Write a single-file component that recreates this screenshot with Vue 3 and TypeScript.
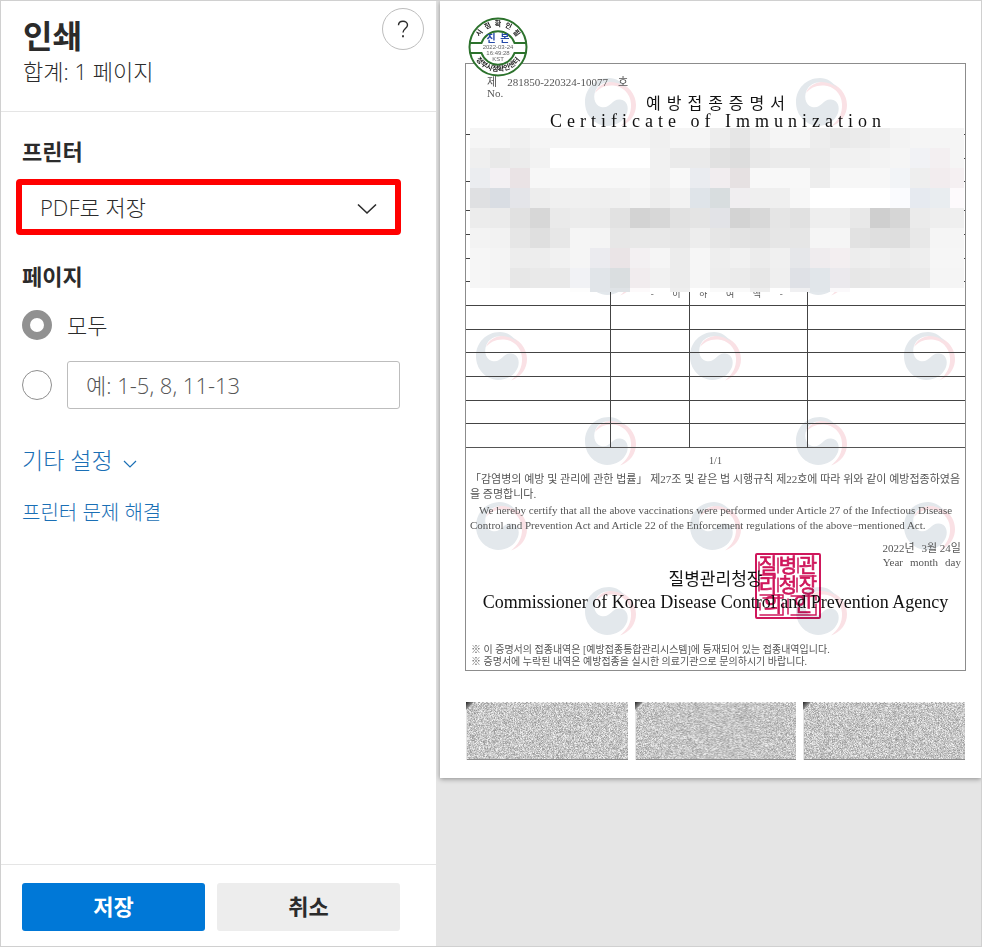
<script setup lang="ts">
import { onMounted, ref } from 'vue'

type PageMode = 'all' | 'range'

const printer = ref('pdf')
const mode = ref<PageMode>('all')
const range = ref('')

/* Redacted block: one entry per 20px cell, two digits for a grey, six for a tint. */
const mosaicRows: string[] = [
  'f5 f5 f0 f5 f5 f5 f5 f5 f5 f0 f5 f5 ed e6 ef f5 f5 ed e9 eb ee f3 f5 f5 f5',
  'ef e9 ec f2 ff ff ff ff ff f1 ea ea e1 dd e8 eb eb eb f1 f1 f3 f5 f1f2f5 f3eff1 f5',
  'ebedf0 f3f0f3 eae3e5 f7 f7 f7 f7 f7 f7 f1 f8 eaecf0 f1edef e6e1e2 f8 f8 f8 ed f7 f7 f7 f2f4f7 ee f2ecee f5f0f2',
  'dfe0e2 d9dde3 e4e5e9 ed f0 f0 ef f0 f3 ed f2 dfe4e9 d8dddf f0eef0 ef ef f7 ff ff ff ff fafbfe e6eaf0 e9edf0 fdfafc',
  'ec eb e1 d7 ea ec eb e2 d3 d7 e1 e4 e2e3e7 d3 d8 e5 e1 ee ee e8 cf d6 eb ee ef',
  'f3 f2 e6 df e7 f5 f4 e7 e8 e8 e6 ed e6 e3 e1 e6 e6 f5 f5 e2 df de e8 f5 f5',
  'f6 f4 ed ed f1 f5 ebebef eae4e6 f3f0f2 f5 ec f6 ee f1 ec f0 e6e7ea efecee f3eef0 ed ef ec ee f6 f6',
  'f6 f4 e7 e9 e9 f1f2f5 e1e5e9 dadee0 f1ecee f1 ec f6 ed eb e7 ef dfe1e6 e1e6ea ebe9ed e7 e9 e9 ea f5 f5',
  'ff ff ff ff ff fd e1e5e9 dfe3e6 fdfafb ff ee ff fa fa ee ff f0f0f2 e1e6ea fbf9fb ff ff ff ff ff ff',
]

const cells = mosaicRows.flatMap((row, y) =>
  row.split(' ').map((tone, x) => ({
    x: x * 20,
    y: y * 20,
    fill: '#' + (tone.length === 2 ? tone.repeat(3) : tone),
  })),
)

const emblems = [
  { col: 'c2', row: 'r1' }, { col: 'c4', row: 'r1' },
  { col: 'c2', row: 'r2' }, { col: 'c4', row: 'r2' },
  { col: 'c1', row: 'r3' }, { col: 'c3', row: 'r3' }, { col: 'c5', row: 'r3' },
  { col: 'c2', row: 'r4' }, { col: 'c4', row: 'r4' },
  { col: 'c1', row: 'r5' }, { col: 'c3', row: 'r5' }, { col: 'c5', row: 'r5' },
  { col: 'c2', row: 'r6' }, { col: 'c4', row: 'r6' },
]

const rowKinds = ['first', 'low', 'tall', '', '', 'low', 'blank', '', 'low', '', '', 'low', '']

const codes = ref<HTMLCanvasElement[]>([])

function paintCode(canvas: HTMLCanvasElement, seed: number) {
  const ctx = canvas.getContext('2d')
  if (!ctx) return
  const { width, height } = canvas
  let s = seed
  const next = () => {
    s = (s + 0x6d2b79f5) | 0
    let t = Math.imul(s ^ (s >>> 15), 1 | s)
    t = (t + Math.imul(t ^ (t >>> 7), 61 | t)) ^ t
    return ((t ^ (t >>> 14)) >>> 0) / 4294967296
  }
  for (let y = 0; y < height; y++) {
    for (let x = 0; x < width; x++) {
      const v = Math.round(146 + (next() + next()) * 52)
      ctx.fillStyle = `rgb(${v},${v},${v})`
      ctx.fillRect(x, y, 1, 1)
    }
  }
  ctx.fillStyle = '#8c8c8c'
  ctx.fillRect(0, height - 1, width, 1)
  for (let x = 2; x < width; x += 4) {
    ctx.fillStyle = '#f2f2f2'
    ctx.fillRect(x, 0, 2, 1)
  }
  ctx.fillStyle = '#e6e6e6'
  ctx.fillRect(0, 0, 1, height)
  const corner = ctx.createLinearGradient(0, 0, 5, 5)
  corner.addColorStop(0, '#222222')
  corner.addColorStop(1, '#aaaaaa')
  ctx.fillStyle = corner
  ctx.beginPath()
  ctx.moveTo(0, 0)
  ctx.lineTo(8, 0)
  ctx.lineTo(0, 8)
  ctx.fill()
}

onMounted(() => codes.value.forEach((c, i) => paintCode(c, 77 + i * 991)))
</script>

<template>
  <div class="dialog">
    <form class="panel" @submit.prevent>
      <header class="head">
        <div>
          <h1>인쇄</h1>
          <p>합계: 1 페이지</p>
        </div>
        <button type="button" class="help" aria-label="도움말">
          <svg width="12" height="18" viewBox="0 0 12 18" fill="none" stroke="#2b2b2b" stroke-width="1.4">
            <path d="M1.500 5.300C1.500 2.400 3.500 1.200 6 1.200S10.500 2.600 10.500 5C10.500 8.400 6 8.600 6 12.600" />
            <path d="M6 15.200V17.200" stroke-width="1.8" />
          </svg>
        </button>
      </header>

      <div class="body">
        <label class="title" for="printer">프린터</label>
        <div class="picker">
          <select id="printer" v-model="printer">
            <option value="pdf">PDF로 저장</option>
          </select>
          <svg class="arrow" width="20" height="12" viewBox="0 0 20 12" fill="none" stroke="#2b2b2b" stroke-width="1.6">
            <path d="M1 1.5L10 10L19 1.5" />
          </svg>
        </div>

        <fieldset>
          <legend class="title">페이지</legend>
          <label class="choice">
            <input v-model="mode" type="radio" name="pages" value="all" />
            <span class="all">모두</span>
          </label>
          <div class="choice">
            <input v-model="mode" type="radio" name="pages" value="range" aria-label="페이지 범위" />
            <input v-model="range" class="range" type="text" placeholder="예: 1-5, 8, 11-13" aria-label="페이지 범위 입력" />
          </div>
        </fieldset>

        <a class="more" href="#more">
          <span>기타 설정</span>
          <svg width="14" height="8" viewBox="0 0 14 8" fill="none" stroke="#1a6fb5" stroke-width="1.2">
            <path d="M1 1L7 7L13 1" />
          </svg>
        </a>
        <a class="fix" href="#troubleshoot">프린터 문제 해결</a>
      </div>

      <footer class="actions">
        <button type="submit" class="save">저장</button>
        <button type="button" class="cancel">취소</button>
      </footer>
    </form>

    <main class="preview">
      <article class="paper">
        <svg class="defs" width="0" height="0" aria-hidden="true">
          <symbol id="emblem" viewBox="0 0 51 49">
            <path fill="#fae1e5" d="M10 15C13 6 24 2 33 4.500C43 7 51 16 51 27C51 37 45 45 35 48.500C42 43 46.500 36 46 26C45.500 15 37 8 28 7.500C20 7 14 10 10 15Z" />
            <path fill="#e3e8ec" d="M41 10C33 2 18 2 12 10C7 17 9 27 16 29C26 31 26 21 35 21.500C42 22 44 29 42 35C39 43 31 48 22 48C9 47 0 37 0 24C0 11 10 0 24 0C31 0 37 4 41 10Z" />
          </symbol>
        </svg>
        <svg v-for="(e, i) in emblems" :key="i" class="emblem" :class="[e.col, e.row]" aria-hidden="true">
          <use href="#emblem" />
        </svg>

        <section class="frame">
          <header class="cert-head">
            <p class="number"><span>제</span><span>281850-220324-10077</span><span>호</span></p>
            <p class="no">No.</p>
            <h2>예방접종증명서</h2>
            <h3>Certificate of Immunization</h3>
          </header>

          <table>
            <colgroup>
              <col class="w1" /><col class="w2" /><col class="w3" /><col />
            </colgroup>
            <tbody>
              <tr v-for="(kind, i) in rowKinds" :key="i" :class="kind">
                <td v-if="i !== 1" :rowspan="i === 0 ? 2 : 1"></td>
                <td>
                  <div v-if="kind === 'blank'" class="below">
                    <span>-</span><span>이</span><span>하</span><span>여</span><span>백</span><span>-</span>
                  </div>
                </td>
                <td></td>
                <td></td>
              </tr>
            </tbody>
          </table>

          <svg class="mosaic" viewBox="0 0 494 164" preserveAspectRatio="none" shape-rendering="crispEdges" aria-hidden="true">
            <rect v-for="(c, i) in cells" :key="i" :x="c.x" :y="c.y" width="20" height="20" :fill="c.fill" />
          </svg>

          <p class="count">1/1</p>
          <p class="clause ko">「감염병의 예방 및 관리에 관한 법률」 제27조 및 같은 법 시행규칙 제22호에 따라 위와 같이 예방접종하였음<br />을 증명합니다.</p>
          <p class="clause en"><span class="indent"></span>We hereby certify that all the above vaccinations were performed under Article 27 of the Infectious Disease<br />Control and Prevention Act and Article 22 of the Enforcement regulations of the above−mentioned Act.</p>
          <div class="date">
            <p><span>2022년</span><span>3월 24일</span></p>
            <p><span>Year</span><span>month</span><span>day</span></p>
          </div>
          <div class="sign">
            <p class="chief">질병관리청장</p>
            <p class="agency">Commissioner of Korea Disease Control and Prevention Agency</p>
            <svg class="seal" width="66" height="66" viewBox="0 0 66 66" fill="none" stroke="#cf175c">
              <rect x="1" y="1" width="64" height="64" rx="1" stroke-width="2" />
              <g class="seal-text" fill="#cf175c" stroke-width="0.7">
                <text x="13" y="20">질</text><text x="33" y="20">병</text><text x="53" y="20">관</text>
                <text x="13" y="40">리</text><text x="33" y="40">청</text><text x="53" y="40">장</text>
                <text x="18" y="59">의</text><text x="48" y="59">인</text>
              </g>
              <g stroke-width="1.5" stroke-linecap="round">
                <path d="M5 22H20V25H7M45 23H61M5 42H28V45H8M36 43H61V47M5 62H28V50M36 62H61V51" />
                <path d="M23 5V20M43 5V20M23 25V39M42 25V39M33 46V61M4 9V18M4 27V38M5 50V57" />
              </g>
            </svg>
          </div>
          <footer class="notes">
            <p>※ 이 증명서의 접종내역은 [예방접종통합관리시스템]에 등재되어 있는 접종내역입니다.</p>
            <p>※ 증명서에 누락된 내역은 예방접종을 실시한 의료기관으로 문의하시기 바랍니다.</p>
          </footer>

          <svg class="stamp" width="60" height="60" viewBox="0 0 60 60" fill="none">
            <defs>
              <path id="arc-top" d="M9 30A21 21 0 0 1 51 30" />
              <path id="arc-bottom" d="M4 33A26.500 26.500 0 0 0 56 33" />
            </defs>
            <circle cx="30" cy="30" r="28.500" fill="#fff" stroke="#2c722c" stroke-width="2" />
            <path d="M2 26H13.500A17.500 17.500 0 0 1 46.500 26H58M2 36H13.500A17.500 17.500 0 0 0 46.500 36H58" stroke="#2c722c" stroke-width="2" />
            <g fill="#222" class="stamp-text">
              <text class="ring"><textPath href="#arc-top" startOffset="50%">시&#160; 점&#160; 확&#160; 인&#160; 필</textPath></text>
              <text class="ring"><textPath href="#arc-bottom" startOffset="50%">정부시점확인센터</textPath></text>
              <text x="30" y="25" class="true">진&#160; 본</text>
              <text x="30" y="32" class="time">2022-03-24</text>
              <text x="30" y="38" class="time">16:49:28</text>
              <text x="30" y="44" class="time">KST</text>
            </g>
          </svg>
        </section>

        <div class="codes">
          <canvas v-for="n in 3" :key="n" ref="codes" width="162" height="58"></canvas>
        </div>
      </article>
    </main>
  </div>
</template>

<style>
body {
  margin: 0;
  background: #e5e5e5;
}
</style>

<style scoped>
* {
  box-sizing: border-box;
}

h1, h2, h3, p {
  margin: 0;
  font-weight: 400;
}

.dialog {
  display: grid;
  grid-template-columns: 435px 1fr;
  min-height: 100vh;
  border: 1px solid #d0d0d0;
  background: #e5e5e5;
  color: #2b2b2b;
  font-family: "Open Sans", "Noto Sans CJK KR", sans-serif;
  font-size: 22px;
  font-weight: 300;
}

.panel {
  display: flex;
  flex-direction: column;
  background: #fff;
}

.head {
  display: flex;
  justify-content: space-between;
  align-items: flex-start;
  height: 111px;
  padding: 7px 12px 0 22px;
  border-bottom: 1px solid #e5e5e5;
}

h1 {
  margin-top: 8px;
  font-size: 32px;
  font-weight: 700;
  line-height: 40px;
}

.head p {
  font-weight: 300;
  line-height: 30px;
}

button {
  border: 0;
  font: inherit;
}

.help {
  display: grid;
  place-items: center;
  width: 42px;
  height: 42px;
  padding: 0;
  border: 1px solid #bdbdbd;
  border-radius: 50%;
  background: #fff;
}

.body {
  display: flex;
  flex: 1;
  flex-direction: column;
  align-items: stretch;
  padding: 23px 36px 24px 21px;
}

.title {
  padding: 0;
  font-weight: 700;
  line-height: 32px;
}

.picker {
  position: relative;
  margin: 12px -1px 25px -6px;
  border: 6px solid #f00;
  border-radius: 4px;
}

select {
  display: block;
  width: 100%;
  height: 44px;
  padding: 0 40px 0 18px;
  border: 0;
  outline: 0;
  appearance: none;
  background: #fff;
  color: inherit;
  font: inherit;
}

.arrow {
  position: absolute;
  top: 18px;
  right: 18px;
  pointer-events: none;
}

fieldset {
  display: flex;
  flex-direction: column;
  gap: 12px;
  margin: 0;
  padding: 9px 0 0;
  border: 0;
}

.choice {
  display: flex;
  align-items: center;
  gap: 15px;
  height: 48px;
}

.all {
  padding-bottom: 2px;
}

input[type='radio'] {
  flex: none;
  width: 30px;
  height: 30px;
  margin: 0;
  border: 1px solid #8f8f8f;
  border-radius: 50%;
  appearance: none;
  background: #fff;
}

input[type='radio']:checked {
  border: 8px solid #919191;
}

.range {
  flex: 1;
  min-width: 0;
  height: 48px;
  padding: 0 18px;
  border: 1px solid #bdbdbd;
  border-radius: 3px;
  color: inherit;
  font: inherit;
}

.range::placeholder {
  color: #555;
}

a {
  align-self: flex-start;
  color: #1a6fb5;
  text-decoration: none;
}

.more {
  display: flex;
  gap: 10px;
  align-items: center;
  margin-top: 34px;
  font-size: 23px;
  line-height: 34px;
}

.more svg {
  margin-top: 8px;
}

.fix {
  margin-top: 21px;
  font-size: 20px;
  line-height: 30px;
}

.actions {
  display: grid;
  grid-template-columns: 1fr 1fr;
  gap: 12px;
  padding: 18px 36px 15px 21px;
  border-top: 1px solid #e5e5e5;
}

.actions button {
  height: 48px;
  padding: 0 0 4px;
  border-radius: 3px;
  font-weight: 700;
}

.save {
  background: #0078d7;
  color: #fff;
}

.cancel {
  background: #ededed;
  color: #2b2b2b;
}

.preview {
  min-width: 0;
  padding-left: 4px;
}

.paper {
  position: relative;
  padding: 62px 15px 18px 25px;
  background: #fff;
  box-shadow: 0 1px 5px rgba(0, 0, 0, 0.4);
  clip-path: inset(0 0 -8px -4px);
  color: #555;
  font-family: "Liberation Serif", "Noto Sans CJK KR", serif;
  font-weight: 400;
}

.defs {
  position: absolute;
}

.emblem {
  position: absolute;
  width: 51px;
  height: 49px;
}

.c1 { left: calc(7% - 2px); }
.c2 { left: calc(27% - 1px); }
.c3 { left: calc(46% + 1px); }
.c4 { left: calc(66% - 1px); }
.c5 { left: calc(86% - 1px); }
.r1 { top: 77px; }
.r2 { top: 246px; }
.r3 { top: 331px; }
.r4 { top: 416px; }
.r5 { top: 501px; }
.r6 { top: 586px; }

.frame {
  position: relative;
  border: 1px solid #8c8c8c;
}

.cert-head {
  height: 70px;
  padding-top: 12px;
  text-align: center;
}

.number {
  display: flex;
  gap: 10px;
  padding-left: 21px;
  font-size: 11px;
  line-height: 12px;
}

.no {
  padding-left: 21px;
  font-size: 11px;
  line-height: 10px;
  text-align: left;
}

h2 {
  margin-top: -3px;
  padding-left: 6px;
  color: #111;
  font-size: 16px;
  letter-spacing: 6px;
  line-height: 18px;
}

h3 {
  padding-left: 5px;
  color: #111;
  font-size: 18px;
  letter-spacing: 5px;
  line-height: 16px;
  white-space: nowrap;
}

table {
  width: 100%;
  border-collapse: collapse;
  table-layout: fixed;
  border-bottom: 1px solid #555;
}

.w1 { width: 28.9%; }
.w2 { width: 15.8%; }
.w3 { width: 23.7%; }

tr { height: 24px; }
tr.low { height: 23px; }
tr.tall { height: 29px; }

td {
  padding: 0;
  border: 1px solid #444;
  border-width: 1px 0 0 1px;
}

td:first-child,
tr.low:nth-child(2) td:first-child {
  border-left: 0;
}

.below {
  position: relative;
  display: flex;
  justify-content: space-between;
  width: 132px;
  height: 22px;
  margin: 0 -100px 0 40px;
  font-size: 9px;
  line-height: 22px;
}

.mosaic {
  position: absolute;
  top: 64px;
  left: 4px;
  width: calc(100% - 5px);
  height: 164px;
}

.count {
  padding-top: 6px;
  font-size: 10px;
  line-height: 14px;
  text-align: center;
}

.clause {
  padding: 0 4px;
  font-size: 11px;
  line-height: 15px;
  white-space: nowrap;
}

.ko {
  margin-top: 4px;
}

.en {
  margin-top: 1px;
}

.indent {
  display: inline-block;
  width: 9px;
}

.date {
  padding: 8px 4px 0 0;
  font-size: 11px;
  line-height: 14px;
}

.date p {
  display: flex;
  justify-content: flex-end;
  gap: 7px;
}

.sign {
  position: relative;
  color: #111;
  line-height: 22px;
  text-align: center;
  white-space: nowrap;
}

.chief {
  font-size: 17px;
}

.agency {
  font-size: 18px;
}

.seal {
  position: absolute;
  top: -16px;
  left: 58%;
  mix-blend-mode: multiply;
}

.seal-text {
  font-family: "Noto Sans CJK KR", sans-serif;
  font-size: 20px;
  font-weight: 400;
  text-anchor: middle;
}

.notes {
  padding: 31px 5px 2px;
  font-size: 10px;
  line-height: 12px;
  white-space: nowrap;
}

.stamp {
  position: absolute;
  top: -47px;
  left: 2px;
}

.stamp-text {
  font-family: "Noto Sans CJK KR", sans-serif;
  font-weight: 700;
  text-anchor: middle;
}

.ring {
  font-size: 7px;
}

.true {
  fill: #2549a8;
  font-size: 10px;
}

.time {
  fill: #666;
  font-family: "Liberation Sans", sans-serif;
  font-size: 6px;
  font-weight: 400;
}

.codes {
  display: grid;
  grid-template-columns: repeat(3, 1fr);
  gap: 7px;
  margin: 31px 1px 0;
}

canvas {
  display: block;
  width: 100%;
  height: 58px;
}
</style>
